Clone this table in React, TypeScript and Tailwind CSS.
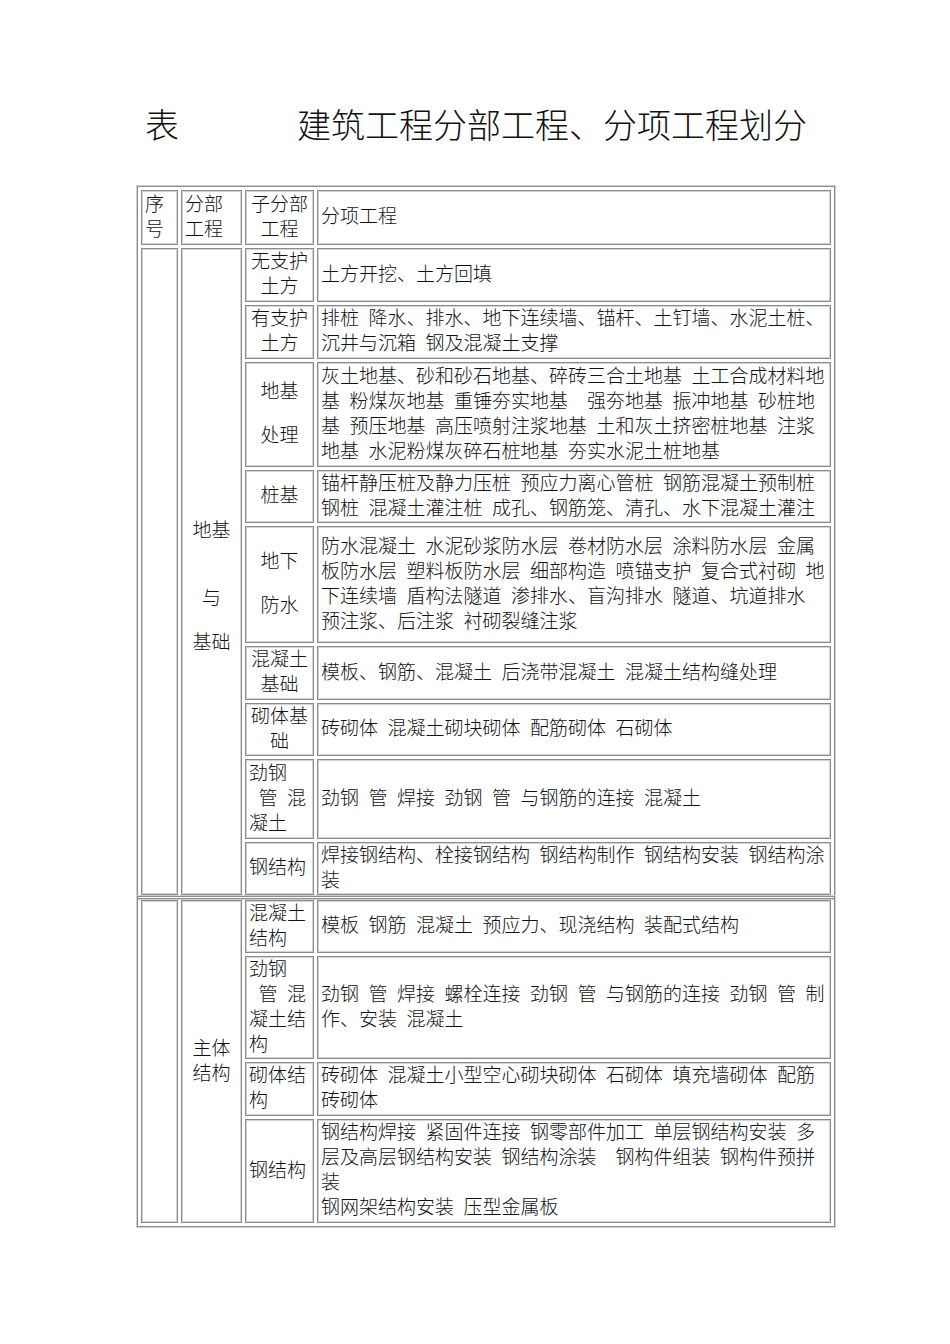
import React from 'react';

const S = '\u2002';
const W = '\u3000';

type Row = {
  sub: string[];
  align: 'center' | 'left';
  spread?: boolean;
  items: string[];
};

const cell = 'border border-[#8c8c8c] shadow-[inset_0_0_0_1px_#d3d3d3] bg-white';

const foundation: Row[] = [
  { sub: ['无支护', '土方'], align: 'center', items: ['土方开挖、土方回填'] },
  {
    sub: ['有支护', '土方'],
    align: 'center',
    items: [`排桩${S}降水、排水、地下连续墙、锚杆、土钉墙、水泥土桩、`, `沉井与沉箱${S}钢及混凝土支撑`],
  },
  {
    sub: ['地基', '处理'],
    align: 'center',
    spread: true,
    items: [
      `灰土地基、砂和砂石地基、碎砖三合土地基${S}土工合成材料地`,
      `基${S}粉煤灰地基${S}重锤夯实地基${W}强夯地基${S}振冲地基${S}砂桩地`,
      `基${S}预压地基${S}高压喷射注浆地基${S}土和灰土挤密桩地基${S}注浆`,
      `地基${S}水泥粉煤灰碎石桩地基${S}夯实水泥土桩地基`,
    ],
  },
  {
    sub: ['桩基'],
    align: 'center',
    items: [
      `锚杆静压桩及静力压桩${S}预应力离心管桩${S}钢筋混凝土预制桩`,
      `钢桩${S}混凝土灌注桩${S}成孔、钢筋笼、清孔、水下混凝土灌注`,
    ],
  },
  {
    sub: ['地下', '防水'],
    align: 'center',
    spread: true,
    items: [
      `防水混凝土${S}水泥砂浆防水层${S}卷材防水层${S}涂料防水层${S}金属`,
      `板防水层${S}塑料板防水层${S}细部构造${S}喷锚支护${S}复合式衬砌${S}地`,
      `下连续墙${S}盾构法隧道${S}渗排水、盲沟排水${S}隧道、坑道排水`,
      `预注浆、后注浆${S}衬砌裂缝注浆`,
    ],
  },
  {
    sub: ['混凝土', '基础'],
    align: 'center',
    items: [`模板、钢筋、混凝土${S}后浇带混凝土${S}混凝土结构缝处理`],
  },
  {
    sub: ['砌体基', '础'],
    align: 'center',
    items: [`砖砌体${S}混凝土砌块砌体${S}配筋砌体${S}石砌体`],
  },
  {
    sub: ['劲钢', `${S}管${S}混`, '凝土'],
    align: 'left',
    items: [`劲钢${S}管${S}焊接${S}劲钢${S}管${S}与钢筋的连接${S}混凝土`],
  },
  {
    sub: ['钢结构'],
    align: 'left',
    items: [`焊接钢结构、栓接钢结构${S}钢结构制作${S}钢结构安装${S}钢结构涂`, '装'],
  },
];

const mainBody: Row[] = [
  {
    sub: ['混凝土', '结构'],
    align: 'left',
    items: [`模板${S}钢筋${S}混凝土${S}预应力、现浇结构${S}装配式结构`],
  },
  {
    sub: ['劲钢', `${S}管${S}混`, '凝土结', '构'],
    align: 'left',
    items: [
      `劲钢${S}管${S}焊接${S}螺栓连接${S}劲钢${S}管${S}与钢筋的连接${S}劲钢${S}管${S}制`,
      `作、安装${S}混凝土`,
    ],
  },
  {
    sub: ['砌体结', '构'],
    align: 'left',
    items: [`砖砌体${S}混凝土小型空心砌块砌体${S}石砌体${S}填充墙砌体${S}配筋`, '砖砌体'],
  },
  {
    sub: ['钢结构'],
    align: 'left',
    items: [
      `钢结构焊接${S}紧固件连接${S}钢零部件加工${S}单层钢结构安装${S}多`,
      `层及高层钢结构安装${S}钢结构涂装${W}钢构件组装${S}钢构件预拼`,
      '装',
      `钢网架结构安装${S}压型金属板`,
    ],
  },
];

function SubCell({ row }: { row: Row }) {
  return (
    <div
      className={`${cell} px-[3px] pb-[6px] flex flex-col justify-center ${row.align === 'center' ? 'items-center' : 'items-start'}`}
    >
      {row.sub.map((t, i) => (
        <div key={i} className={`whitespace-pre ${row.spread && i > 0 ? 'mt-[19px]' : ''}`}>
          {t}
        </div>
      ))}
    </div>
  );
}

function ItemCell({ items }: { items: string[] }) {
  return (
    <div className={`${cell} px-[3px] pb-[6px] flex flex-col justify-center`}>
      {items.map((t, i) => (
        <div key={i} className="whitespace-pre">
          {t}
        </div>
      ))}
    </div>
  );
}

export default function App() {
  return (
    <div className="min-h-[1344px] w-[950px] bg-white text-[#111] font-['Noto_Sans_CJK_SC',sans-serif] font-light">
      <div className="pt-[104px] pl-[145px] flex items-center h-[144px] text-[34px] leading-[40px]">
        <span>表</span>
        <span className="ml-[118px]">建筑工程分部工程、分项工程划分</span>
      </div>

      <div className="ml-[137px] mt-[42px] text-[19px] leading-[25px]">
        <div className="w-[698px] grid grid-cols-[37px_61px_69px_514px] grid-rows-[55px_54px_54px_105px_53px_117px_54px_53px_80px_53px] gap-[3px] p-[3px] border border-[#8c8c8c] shadow-[0_0_0_1px_#cfcfcf]">
          <div className={`${cell} px-[3px] pb-[6px] flex flex-col justify-center`}>
            <div>序</div>
            <div>号</div>
          </div>
          <div className={`${cell} px-[3px] pb-[6px] flex flex-col justify-center`}>
            <div>分部</div>
            <div>工程</div>
          </div>
          <div className={`${cell} px-[3px] pb-[6px] flex flex-col justify-center items-center`}>
            <div>子分部</div>
            <div>工程</div>
          </div>
          <div className={`${cell} px-[3px] pb-[6px] flex flex-col justify-center`}>
            <div>分项工程</div>
          </div>

          <div className={`${cell} col-start-1 row-start-2 row-span-9`} />
          <div className={`${cell} col-start-2 row-start-2 row-span-9 flex flex-col items-center justify-center pt-[26px]`}>
            <div>地基</div>
            <div className="mt-[43px]">与</div>
            <div className="mt-[19px]">基础</div>
          </div>
          {foundation.map((r, i) => (
            <React.Fragment key={i}>
              <SubCell row={r} />
              <ItemCell items={r.items} />
            </React.Fragment>
          ))}
        </div>

        <div className="-mt-[3px] w-[698px] grid grid-cols-[37px_61px_69px_514px] grid-rows-[53px_103px_54px_104px] gap-[3px] p-[3px] border border-[#8c8c8c] shadow-[0_0_0_1px_#cfcfcf]">
          <div className={`${cell} col-start-1 row-start-1 row-span-4`} />
          <div className={`${cell} col-start-2 row-start-1 row-span-4 pb-[6px] flex flex-col items-center justify-center`}>
            <div>主体</div>
            <div>结构</div>
          </div>
          {mainBody.map((r, i) => (
            <React.Fragment key={i}>
              <SubCell row={r} />
              <ItemCell items={r.items} />
            </React.Fragment>
          ))}
        </div>
      </div>
    </div>
  );
}
